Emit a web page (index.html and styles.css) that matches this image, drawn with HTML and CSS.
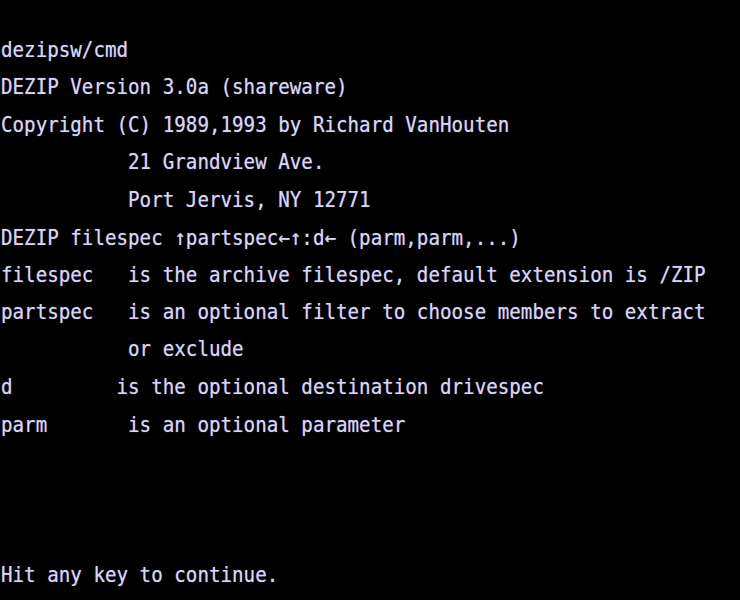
FILE: index.html
```html
<!DOCTYPE html>
<html>
<head>
<meta charset="utf-8">
<link rel="stylesheet" href="styles.css">
</head>
<body>
<div class="screen">
<pre class="term">

dezipsw/cmd
DEZIP Version 3.0a (shareware)
Copyright (C) 1989,1993 by Richard VanHouten
           21 Grandview Ave.
           Port Jervis, NY 12771
DEZIP filespec ↑partspec←↑:d← (parm,parm,...)
filespec   is the archive filespec, default extension is /ZIP
partspec   is an optional filter to choose members to extract
           or exclude
d         is the optional destination drivespec
parm       is an optional parameter



Hit any key to continue.</pre>
</div>
</body>
</html>
```
FILE: styles.css
```css
html, body {
  margin: 0;
  padding: 0;
  background: #000;
  width: 740px;
  height: 600px;
  overflow: hidden;
}
.screen {
  width: 740px;
  height: 600px;
  background: #000;
  overflow: hidden;
}
.term {
  margin: -6px 0 0 0;
  padding: 0 0 0 1px;
  font-family: "DejaVu Sans Mono", monospace;
  font-size: 19.2px;
  line-height: 32.6087px;
  color: #d8d4f6;
  text-shadow: 0 0 1px rgba(200, 195, 255, 0.6);
  transform: scaleY(1.15);
  transform-origin: 0 0;
  white-space: pre;
}
```
